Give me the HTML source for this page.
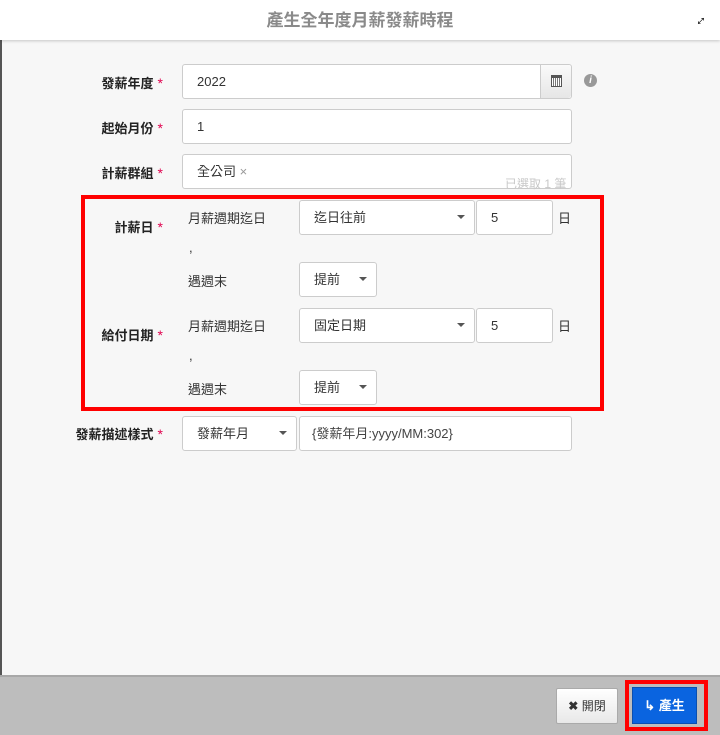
<!DOCTYPE html>
<html><head><meta charset="utf-8"><style>
*{box-sizing:border-box;margin:0;padding:0}
body{width:720px;height:735px;overflow:hidden;background:#f7f7f7;font-family:"Liberation Sans","Noto Sans CJK TC",sans-serif;position:relative;font-size:13px;color:#333}
.a{position:absolute}
.hdr{left:0;top:0;width:720px;height:40px;background:#fff;box-shadow:0 1px 3px rgba(0,0,0,.2);text-align:center;line-height:42px;font-size:17px;color:#8a8a8a;font-weight:bold;z-index:2}
.strip{left:0;top:0;width:2px;height:735px;background:#555}
.lbl{font-weight:bold;font-size:13px;color:#222;text-align:right;width:200px}
.lbl b{color:#e0004d;font-weight:normal;margin-left:4px;font-size:14px}
.in{background:#fff;border:1px solid #ccc;border-radius:3px;height:35px;line-height:33px;padding-left:14px;font-size:13px;color:#333}
.sel::after{content:"";position:absolute;right:9px;top:14px;border-left:4px solid transparent;border-right:4px solid transparent;border-top:4px solid #555}
.t{font-size:13px;color:#333}
.ftr{left:0;top:675px;width:720px;height:60px;background:#bdbdbd;border-top:2px solid #a8a8a8}
</style></head><body>
<div class="a strip"></div>
<div class="a hdr">產生全年度月薪發薪時程</div>
<div class="a" style="left:692px;top:11px;font-size:14px;color:#000;transform:rotate(-45deg);z-index:3;font-weight:bold">↔</div>

<div class="a lbl" style="left:-37px;top:73px">發薪年度<b>*</b></div>
<div class="a in" style="left:182px;top:64px;width:390px">2022</div>
<div class="a" style="left:540px;top:65px;width:31px;height:33px;background:linear-gradient(#fafafa,#e6e6e6);border-left:1px solid #ccc;border-radius:0 3px 3px 0"><div style="margin:10px 0 0 10px;width:11px;height:12px;border:1px solid #555;border-top:3px solid #555;background:repeating-linear-gradient(90deg,#fff 0 1px,#777 1px 2px)"></div></div>
<div class="a" style="left:584px;top:74px;width:13px;height:13px;border-radius:50%;background:#999;color:#fff;font-size:10px;font-style:italic;font-weight:bold;text-align:center;line-height:13px">i</div>

<div class="a lbl" style="left:-37px;top:118px">起始月份<b>*</b></div>
<div class="a in" style="left:182px;top:109px;width:390px">1</div>

<div class="a lbl" style="left:-37px;top:163px">計薪群組<b>*</b></div>
<div class="a in" style="left:182px;top:154px;width:390px;line-height:33px">全公司 <span style="color:#999;font-size:13px">×</span></div>
<div class="a" style="left:505px;top:175px;font-size:12px;color:#c8c8c8">已選取 1 筆</div>

<div class="a" style="left:81px;top:195px;width:523px;height:216px;border:4px solid #f00"></div>

<div class="a lbl" style="left:-37px;top:217px">計薪日<b>*</b></div>
<div class="a t" style="left:188px;top:208px">月薪週期迄日</div>
<div class="a in sel" style="left:299px;top:200px;width:176px">迄日往前</div>
<div class="a in" style="left:476px;top:200px;width:77px">5</div>
<div class="a t" style="left:558px;top:208px">日</div>
<div class="a t" style="left:189px;top:240px">,</div>
<div class="a t" style="left:188px;top:271px">遇週末</div>
<div class="a in sel" style="left:299px;top:262px;width:78px">提前</div>

<div class="a lbl" style="left:-37px;top:325px">給付日期<b>*</b></div>
<div class="a t" style="left:188px;top:316px">月薪週期迄日</div>
<div class="a in sel" style="left:299px;top:308px;width:176px">固定日期</div>
<div class="a in" style="left:476px;top:308px;width:77px">5</div>
<div class="a t" style="left:558px;top:316px">日</div>
<div class="a t" style="left:189px;top:348px">,</div>
<div class="a t" style="left:188px;top:379px">遇週末</div>
<div class="a in sel" style="left:299px;top:370px;width:78px">提前</div>

<div class="a lbl" style="left:-37px;top:424px">發薪描述樣式<b>*</b></div>
<div class="a in sel" style="left:182px;top:416px;width:115px">發薪年月</div>
<div class="a in" style="left:299px;top:416px;width:273px;padding-left:12px;color:#444">{發薪年月:yyyy/MM:302}</div>

<div class="a ftr"></div>
<div class="a" style="left:556px;top:688px;width:62px;height:36px;background:linear-gradient(#fff,#e8e8e8);border:1px solid #aaa;border-radius:2px;font-size:12px;color:#333;line-height:34px;text-align:center"><b>✖</b> 開閉</div>
<div class="a" style="left:625px;top:680px;width:83px;height:51px;border:4px solid #f00"></div>
<div class="a" style="left:632px;top:687px;width:65px;height:37px;background:#0a64e0;border:1px solid #0a4fb0;color:#fff;font-size:13px;font-weight:bold;line-height:35px;text-align:center">↳ 產生</div>
</body></html>
